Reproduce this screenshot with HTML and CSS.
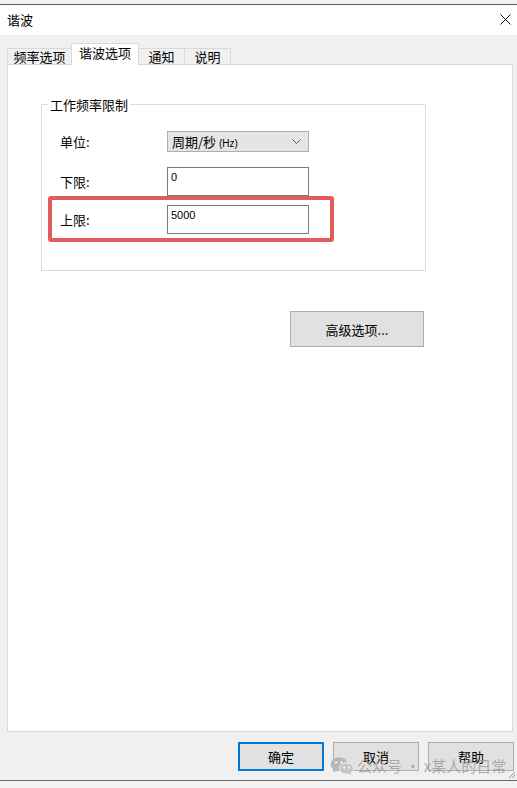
FILE: index.html
```html
<!DOCTYPE html>
<html lang="zh-CN">
<head>
  <meta charset="UTF-8">
  <title>谐波</title>
  <link rel="stylesheet" href="styles.css">
</head>
<body>
  <div class="window">
    <div class="titlebar">
      <span class="title">谐波</span>
      <svg class="close" width="11" height="11" viewBox="0 0 11 11"><path d="M0.5 0.5 L10.5 10.5 M10.5 0.5 L0.5 10.5" stroke="#111" stroke-width="1"/></svg>
    </div>
    <div class="client">
      <div class="tabs">
        <span class="tab tab-1">频率选项</span>
        <span class="tab active">谐波选项</span>
        <span class="tab tab-s">通知</span>
        <span class="tab tab-s">说明</span>
      </div>
      <div class="panel">
        <div class="group">
          <div class="legend">工作频率限制</div>
          <div class="row row-unit">
            <span class="label">单位:</span>
            <div class="combo">
              <span>周期/秒 <small>(Hz)</small></span>
              <svg width="9" height="5" viewBox="0 0 9 5"><path d="M0.5 0.5 L4.5 4.5 L8.5 0.5" fill="none" stroke="#555" stroke-width="1"/></svg>
            </div>
          </div>
          <div class="row row-low">
            <span class="label">下限:</span>
            <div class="input">0</div>
          </div>
          <div class="row row-high">
            <span class="label">上限:</span>
            <div class="input">5000</div>
          </div>
          <div class="highlight"></div>
        </div>
        <div class="advanced-row">
          <button class="btn btn-adv">高级选项...</button>
        </div>
      </div>
      <div class="footer">
        <button class="btn btn-default">确定</button>
        <button class="btn">取消</button>
        <button class="btn">帮助</button>
      </div>

      <!-- watermark over the buttons -->
      <div class="watermark">
        <svg width="24" height="18" viewBox="0 0 24 18">
          <ellipse cx="9" cy="7" rx="8.5" ry="6.8" fill="#b9b9b9"/>
          <path d="M4 11.5 L3 15.5 L7.5 13" fill="#b9b9b9"/>
          <ellipse cx="16.5" cy="11.5" rx="7" ry="5.6" fill="#c6c6c6" stroke="#f0f0f0" stroke-width="1"/>
          <path d="M20 15 L21.5 17.8 L17.5 16.5" fill="#c6c6c6"/>
          <circle cx="6" cy="5.5" r="1.1" fill="#fff"/>
          <circle cx="11.5" cy="5.5" r="1.1" fill="#fff"/>
          <circle cx="14.2" cy="10.5" r="0.9" fill="#fff"/>
          <circle cx="18.8" cy="10.5" r="0.9" fill="#fff"/>
        </svg>
        <span>公众号 · x某人的日常</span>
      </div>
      <svg class="grip" width="8" height="8" viewBox="0 0 8 8"><path d="M7 1 L1 7 M7 4 L4 7" stroke="#999" stroke-width="1"/></svg>
    </div>
  </div>
</body>
</html>
```

FILE: styles.css
```css
body {
  margin: 0;
  background-color: #f3f3f3;
  font-family: "Liberation Sans", "Noto Sans CJK SC", sans-serif;
  font-size: 13px;
  color: #000;
}
.window {
  margin-top: 4px;
  border-top: 1px solid #5a5a5a;
  box-shadow: 0 3px 6px rgba(0, 0, 0, 0.18);
}
.titlebar {
  height: 30px;
  background-color: #fff;
  display: flex;
  align-items: center;
  justify-content: space-between;
  padding: 0 6px 2px 7px;
  box-sizing: border-box;
}
.title {
  font-family: "Noto Sans CJK SC", sans-serif;
  font-size: 13px;
}
.client {
  position: relative;
  height: 745px;
  background-color: #f0f0f0;
  border-bottom: 1px solid #6a6a6a;
}
.tabs {
  height: 29px;
  display: flex;
  align-items: flex-end;
  padding-left: 7px;
}
.tab {
  box-sizing: border-box;
  height: 16px;
  border: 1px solid #d9d9d9;
  border-bottom: none;
  background-color: #f0f0f0;
  text-align: center;
  font-family: "Noto Sans CJK SC", sans-serif;
  font-size: 13px;
  line-height: 15px;
  margin-left: -1px;
}
.tab-1 {
  width: 65px;
  margin-left: 0;
}
.tab-s {
  width: 47px;
}
.tab.active {
  position: relative;
  z-index: 1;
  width: 68px;
  height: 22px;
  margin-bottom: -1px;
  background-color: #fff;
  padding-top: 1px;
  line-height: 15px;
}
.panel {
  box-sizing: border-box;
  margin-left: 7px;
  width: 506px;
  height: 668px;
  background-color: #fff;
  border: 1px solid #d9d9d9;
}
.group {
  position: relative;
  box-sizing: border-box;
  margin: 39px 0 0 33px;
  width: 385px;
  height: 167px;
  border: 1px solid #dcdcdc;
  padding-left: 18px;
}
.legend {
  width: fit-content;
  margin: -9px 0 0 -12px;
  padding: 0 2px;
  background-color: #fff;
  line-height: 17px;
  font-family: "Noto Sans CJK SC", sans-serif;
}
.row {
  display: flex;
  align-items: center;
}
.label {
  width: 107px;
  font-family: "Noto Sans CJK SC", sans-serif;
}
.row-unit {
  margin-top: 18px;
}
.row-low {
  margin-top: 15px;
}
.row-high {
  margin-top: 9px;
}
.combo {
  box-sizing: border-box;
  width: 142px;
  height: 21px;
  background-color: #e5e5e5;
  border: 1px solid #adadad;
  display: flex;
  align-items: center;
  justify-content: space-between;
  padding: 0 7px 0 4px;
  font-family: "Noto Sans CJK SC", sans-serif;
}
.combo small {
  font-family: "Liberation Sans", sans-serif;
  font-size: 10px;
}
.input {
  box-sizing: border-box;
  width: 142px;
  height: 29px;
  border: 1px solid #7a7a7a;
  background-color: #fff;
  padding: 2px 0 0 3px;
  font-size: 11px;
  line-height: 14px;
  color: #000;
}
.highlight {
  position: absolute;
  left: 6px;
  top: 91px;
  width: 286px;
  height: 46px;
  box-sizing: border-box;
  border: 4px solid #e25c5c;
  border-radius: 3px;
}
.advanced-row {
  margin-top: 40px;
  padding-left: 282px;
}
.btn {
  box-sizing: border-box;
  background-color: #e1e1e1;
  border: 1px solid #adadad;
  font-family: "Noto Sans CJK SC", sans-serif;
  font-size: 13px;
  color: #000;
  padding: 0;
  margin: 0;
}
.btn-adv {
  width: 134px;
  height: 36px;
}
.footer {
  display: flex;
  gap: 9px;
  margin-top: 10px;
  padding-left: 238px;
}
.footer .btn {
  width: 86px;
  height: 29px;
}
.footer .btn-default {
  border: 2px solid #0078d7;
}
.watermark {
  position: absolute;
  left: 330px;
  top: 720px;
  display: flex;
  align-items: center;
  gap: 3px;
  white-space: nowrap;
  color: rgba(150, 150, 150, 0.75);
  font-family: "Noto Sans CJK SC", sans-serif;
  font-size: 15px;
  line-height: 22px;
}
.grip {
  position: absolute;
  right: 1px;
  bottom: 1px;
}
```
